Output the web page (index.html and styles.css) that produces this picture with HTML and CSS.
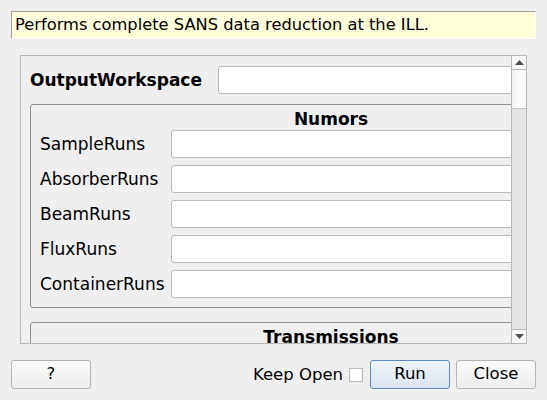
FILE: index.html
```html
<!DOCTYPE html>
<html>
<head>
<meta charset="utf-8">
<link rel="stylesheet" href="styles.css">
</head>
<body>
<div class="dialog">
  <div class="desc">Performs complete SANS data reduction at the ILL.</div>
  <div class="scrollarea">
    <div class="viewport">
      <div class="content">
        <div class="row-main">
          <span class="main-label">OutputWorkspace</span>
          <span class="input wide"></span>
        </div>
        <div class="group">
          <div class="group-title">Numors</div>
          <div class="group-rows">
            <div class="row"><span class="label">SampleRuns</span><span class="input"></span></div>
            <div class="row"><span class="label">AbsorberRuns</span><span class="input"></span></div>
            <div class="row"><span class="label">BeamRuns</span><span class="input"></span></div>
            <div class="row"><span class="label">FluxRuns</span><span class="input"></span></div>
            <div class="row"><span class="label">ContainerRuns</span><span class="input"></span></div>
          </div>
        </div>
        <div class="group group-next">
          <div class="group-title">Transmissions</div>
        </div>
      </div>
    </div>
    <div class="scrollbar">
      <div class="sb-btn sb-up"><svg width="9" height="5" viewBox="0 0 9 5"><path d="M0 5 L4.5 0 L9 5 Z" fill="#505050"/></svg></div>
      <div class="sb-handle"></div>
      <div class="sb-track"></div>
      <div class="sb-btn sb-down"><svg width="9" height="5" viewBox="0 0 9 5"><path d="M0 0 L9 0 L4.5 5 Z" fill="#505050"/></svg></div>
    </div>
  </div>
  <div class="buttonbar">
    <button class="btn help">?</button>
    <div class="spacer"></div>
    <label class="keep">Keep Open <span class="checkbox"></span></label>
    <button class="btn default">Run</button>
    <button class="btn">Close</button>
  </div>
</div>
</body>
</html>
```

FILE: styles.css
```css
html, body {
  margin: 0;
  padding: 0;
  background: #efefef;
}
body {
  width: 547px;
  height: 400px;
  overflow: hidden;
  font-family: "DejaVu Sans", sans-serif;
  font-size: 17px;
  color: #000;
}
.dialog {
  padding-top: 11px;
}
.desc {
  margin: 0 11px;
  height: 26px;
  line-height: 26px;
  font-size: 16.3px;
  background: #ffffdc;
  border-top: 1px solid #a0a0a0;
  border-left: 1px solid #a0a0a0;
  border-right: 1px solid #ffffff;
  border-bottom: 1px solid #ffffff;
  padding-left: 3px;
  white-space: nowrap;
}
.scrollarea {
  margin: 16px 0 0 20px;
  width: 505px;
  height: 287px;
  border: 1px solid #b7b7b7;
  display: flex;
}
.viewport {
  flex: 1;
  overflow: hidden;
}
.content {
  width: 620px;
  padding: 10px 0 0 9px;
}
.row-main {
  display: flex;
  align-items: center;
  height: 28px;
}
.main-label {
  font-weight: bold;
  width: 188px;
  flex: none;
}
.input {
  display: block;
  height: 26px;
  background: #fff;
  border: 1px solid #b9b9b9;
  border-radius: 3px;
  flex: 1;
}
.group {
  box-sizing: border-box;
  margin-top: 10px;
  width: 602px;
  border: 1px solid #8e8e8e;
  border-radius: 3px;
  padding: 4px 9px 9px 9px;
}
.group-next {
  margin-top: 14px;
  height: 60px;
}
.group-title {
  font-weight: bold;
  text-align: center;
  height: 20px;
  line-height: 20px;
  margin-bottom: 1px;
  white-space: nowrap;
}
.group-rows {
  display: flex;
  flex-direction: column;
  gap: 7px;
}
.row {
  display: flex;
  align-items: center;
  height: 28px;
}
.label {
  width: 131px;
  flex: none;
  white-space: nowrap;
}
.scrollbar {
  width: 14px;
  border-left: 1px solid #b7b7b7;
  display: flex;
  flex-direction: column;
  background: #e3e3e3;
}
.sb-btn {
  height: 13px;
  background: #f7f7f7;
  display: flex;
  align-items: center;
  justify-content: center;
  flex: none;
}
.sb-up {
  border-bottom: 1px solid #b7b7b7;
}
.sb-down {
  border-top: 1px solid #b7b7b7;
}
.sb-handle {
  height: 38px;
  flex: none;
  background: linear-gradient(to right, #f2f2f2, #ffffff 60%, #f6f6f6);
  border-bottom: 1px solid #c4c4c4;
}
.sb-track {
  flex: 1;
  background: #e3e3e3;
}
.buttonbar {
  display: flex;
  align-items: center;
  margin-top: 16px;
  padding: 0 11px;
  gap: 6px;
  font-size: 16.5px;
}
.spacer {
  flex: 1;
}
.btn {
  font-family: "DejaVu Sans", sans-serif;
  font-size: 16.5px;
  color: #000;
  width: 80px;
  height: 29px;
  padding: 0 0 2px 0;
  border: 1px solid #b3b3b3;
  border-radius: 3px;
  background: linear-gradient(to bottom, #fbfbfb, #ededed);
}
.btn.default {
  border-color: #5b8bbd;
  background: linear-gradient(to bottom, #eef3f8, #dbe4ee);
}
.keep {
  display: flex;
  align-items: center;
  gap: 6px;
  margin-right: 1px;
}
.checkbox {
  display: block;
  width: 12px;
  height: 12px;
  background: #fff;
  border: 1px solid #b9b9b9;
}
```
